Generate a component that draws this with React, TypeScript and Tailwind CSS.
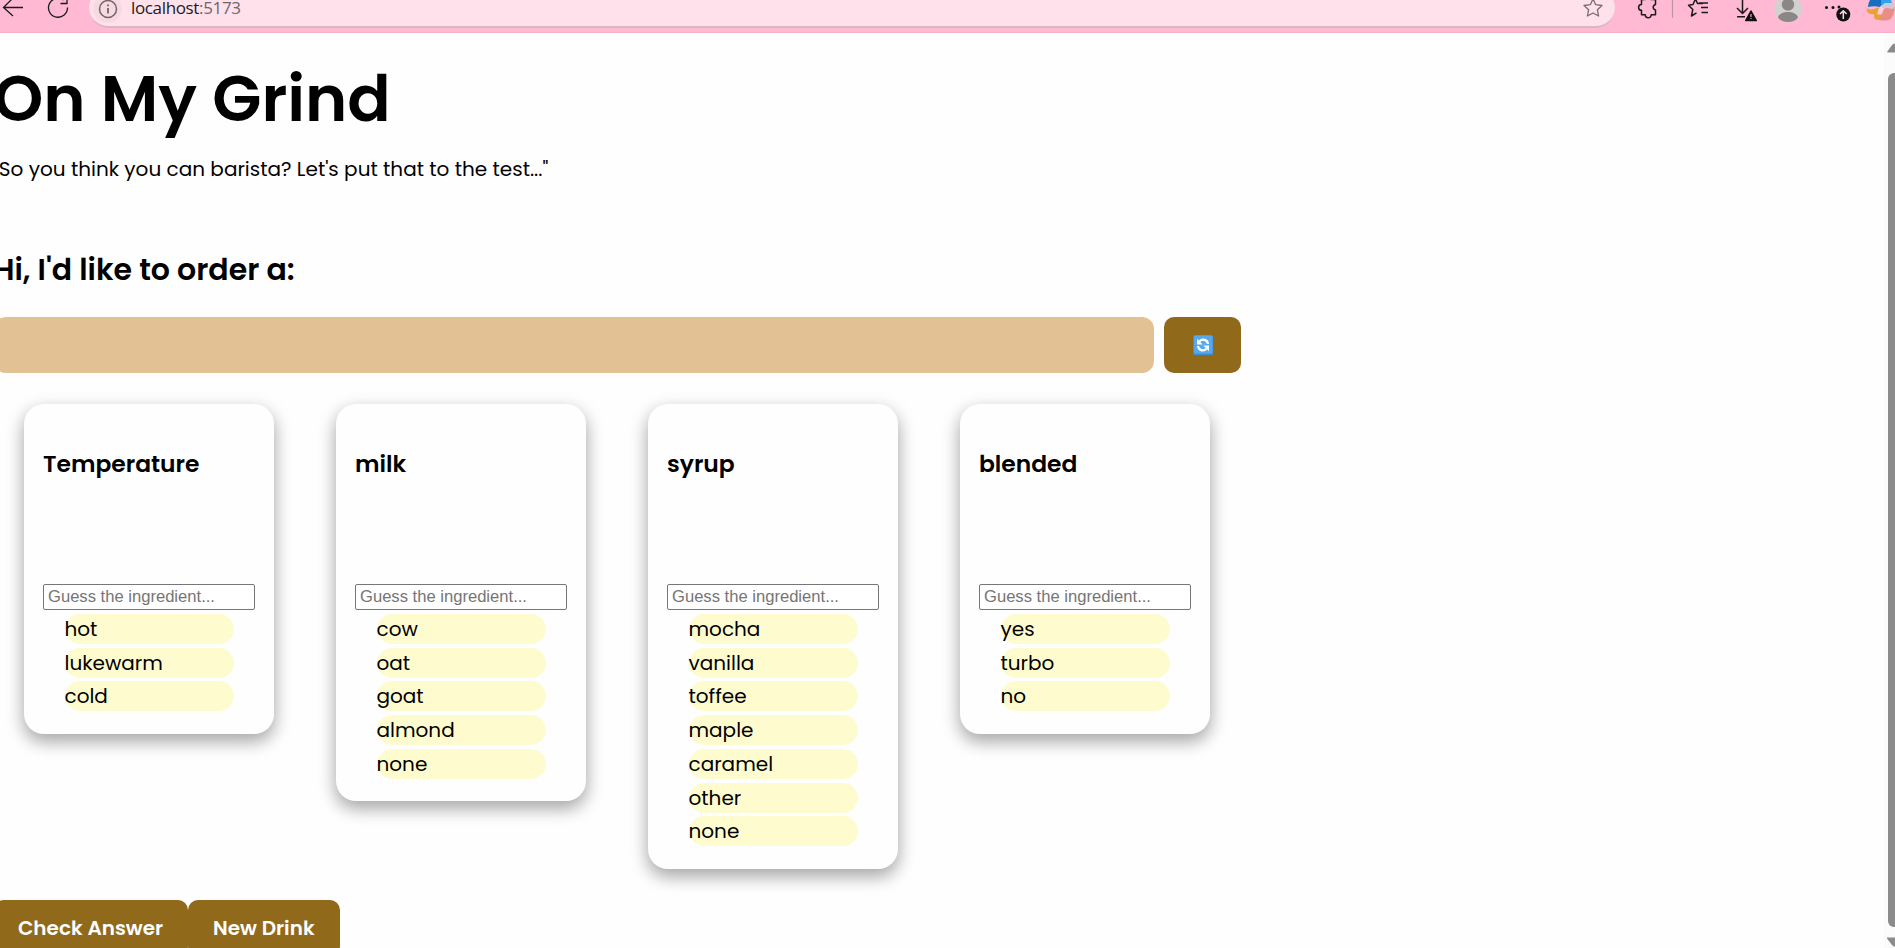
import React from "react";

const columns = [
  { title: "Temperature", items: ["hot", "lukewarm", "cold"] },
  { title: "milk", items: ["cow", "oat", "goat", "almond", "none"] },
  { title: "syrup", items: ["mocha", "vanilla", "toffee", "maple", "caramel", "other", "none"] },
  { title: "blended", items: ["yes", "turbo", "no"] },
];

function BrowserBar() {
  return (
    <header className="relative flex h-[33px] shrink-0 items-start overflow-hidden border-b border-[#f3b0c8] bg-[#ffb9d2] text-[#1b1b1b]">
      <svg className="h-[33px] w-[89px] shrink-0" viewBox="0 0 89 33" fill="none" stroke="currentColor" strokeWidth="1.3">
        <path d="M23 7.5H3.5M12.5 -1.5L3.500 7.500l9.500 8.500" />
        <path d="M63.500 0A9.500 9.500 0 1 0 67.500 7.500M60.500 3.500h6.500V-2" />
      </svg>
      <div className="-mt-[12px] flex h-[40px] w-[1526px] shrink-0 items-center rounded-full border-b-2 border-[#d9b8c4] bg-[#ffe1eb] pl-[4px] pr-[11px]">
        <div className="mt-[3px] flex size-[29px] items-center justify-center rounded-full bg-[#f7d9e2]">
          <svg className="size-[20px]" viewBox="0 0 20 20" fill="none" stroke="#73656a" strokeWidth="1.500">
            <circle cx="10" cy="10" r="8.500" />
            <path d="M10 9v5.500M10 5.500v1.800" strokeWidth="1.800" />
          </svg>
        </div>
        <p className="ml-[9px] mt-[2px] font-['Open_Sans',sans-serif] text-[17px] leading-[24px] tracking-[-0.35px] text-[#1b1b1b]">
          localhost<span className="text-[#70656a]">:5173</span>
        </p>
        <svg className="ml-auto mt-[1px] size-[22px]" viewBox="0 0 22 22" fill="none" stroke="#7b6b71" strokeWidth="1.300" strokeLinejoin="round">
          <path d="M11 2l2.700 5.700 6.300.8-4.600 4.300 1.200 6.200L11 16l-5.600 3 1.200-6.200L2 8.500l6.300-.8z" />
        </svg>
      </div>
      <svg className="h-[33px] w-[280px] shrink-0" viewBox="1615 0 280 33" fill="none" stroke="currentColor" strokeWidth="1.500" strokeLinejoin="round">
        <path d="M1641.500 -0.500h3.500a3 3 0 0 1 6 0h4.500v5a2.800 2.800 0 0 0 0 5.500v4.800h-4.300a3 3 0 0 1-6 0h-3.700v-4.500a2.900 2.900 0 0 1 0-5.800z" />
        <path d="M1672.500 0v18" stroke="#bd96a3" strokeWidth="1.200" />
        <path d="M1703 3.500h-5.500L1695.500 -1l-2.500 5.500-4.500.7 4.300 4.300-1.300 6.500 5-3.200M1701 7.500h7M1699 3h9M1701.500 12.500h6.500" />
        <path d="M1742.500 -2V13M1737 8l5.500 5.500L1748 8M1737 16.700h8" />
        <path d="M1751 11l5.300 9.500h-10.600z" fill="#111" stroke="#111" />
        <path d="M1751 14v3M1751 18v1" stroke="#eaa9c1" strokeWidth="1.200" />
        <circle cx="1788" cy="8.500" r="13.700" fill="#d1d1d1" stroke="none" />
        <circle cx="1788" cy="4.500" r="6.200" fill="#8b8787" stroke="none" />
        <path d="M1778 17.500c1-7.500 19-7.500 20 0-4 6-16 6-20 0z" fill="#8b8787" stroke="none" />
        <g fill="#111" stroke="none">
          <circle cx="1826.500" cy="7.500" r="1.500" />
          <circle cx="1833" cy="7.500" r="1.500" />
          <circle cx="1839" cy="7" r="1.500" />
          <circle cx="1843.300" cy="14.500" r="7" />
        </g>
        <path d="M1843.300 19v-8M1840 14l3.300-3.300 3.300 3.300" stroke="#ffd9e6" />
        <g stroke="none">
          <path d="M1870 0h14l-4 7c-4-1-8-1-12 0 0-3 1-5 2-7z" fill="#176fc0" />
          <path d="M1881 0h10l1 3h-7l-4 3z" fill="#2fa4ea" />
          <path d="M1867 8c4 3 7 1 12-1l-2 7c2 1 4 1 6 0-1 4-2 6-5 6-4 0-4-3-4-6-5 1-8-2-7-6z" fill="#e9a23a" />
          <path d="M1886 5h7c3 2 1 9-1 12-2 4-6 4-13 3 3-4 4-10 7-15z" fill="#e98e84" />
          <path d="M1882 6l3-3h8c2 2 1 4 0 6l-6-1-4 1z" fill="#cfc6dc" />
          <path d="M1880 7l4 1-3 6h-3z" fill="#ffd0dc" />
        </g>
      </svg>
    </header>
  );
}

function RefreshIcon() {
  return (
    <svg className="size-[20px]" viewBox="0 0 20 20" role="img">
      <rect width="20" height="20" rx="1.500" fill="#3f8fd6" />
      <rect x="1" y="0.500" width="18.500" height="18" rx="1.500" fill="#58a8ec" />
      <g fill="none" stroke="#fff" strokeWidth="2.200">
        <path d="M6.500 6.200C9.500 3.200 14.600 4.600 14.900 9" />
        <path d="M13.500 13.800C10.500 16.800 5.400 15.400 5.100 11" />
      </g>
      <path d="M4 3.800v5.700h5.700zM16 16.200v-5.700h-5.700z" fill="#fff" />
    </svg>
  );
}

function IngredientCard({ title, items }: { title: string; items: string[] }) {
  return (
    <section className="flex w-[250px] flex-col rounded-[20px] bg-[#fefefe] px-[19px] pb-[22.500px] shadow-[0_8px_16px_0_rgba(0,0,0,0.2),0_6px_20px_0_rgba(0,0,0,0.19)]">
      <h3 className="mt-[42px] text-[23.400px] font-semibold leading-[36px]">{title}</h3>
      <input
        className="mt-[102px] h-[26px] w-[212px] rounded-[2px] border border-[#767676] bg-white px-[4px] font-['Liberation_Sans',Arial,sans-serif] text-[16.600px] placeholder:text-[#757575]"
        placeholder="Guess the ingredient..."
      />
      <ul className="ml-[21.500px] mt-[4px] flex w-[169px] flex-col gap-[3.730px]">
        {items.map((item) => (
          <li key={item} className="h-[30px] rounded-full bg-[#fefccf] text-[20px] leading-[30px]">
            {item}
          </li>
        ))}
      </ul>
    </section>
  );
}

export default function App() {
  return (
    <div className="flex h-[948px] w-[1895px] flex-col overflow-hidden bg-[#fefefe] font-[Poppins,Inter,sans-serif] text-black">
      <BrowserBar />
      <div className="flex min-h-0 flex-1">
        <main className="min-w-0 flex-1 overflow-hidden">
          <h1 className="-ml-[7px] mt-[18px] whitespace-nowrap text-[64px] font-semibold leading-[96px]">On My Grind</h1>
          <p className="-ml-[7px] mt-[7px] whitespace-nowrap text-[20px] leading-[30px]">
            "So you think you can barista? Let's put that to the test..."
          </p>
          <h2 className="-ml-[7px] mt-[62px] whitespace-nowrap text-[30px] font-semibold leading-[48px]">Hi, I'd like to order a:</h2>
          <div className="-ml-[6px] mt-[23px] flex gap-[10px]">
            <div className="h-[56px] w-[1160px] rounded-[12px] bg-[#e2c294]" />
            <button className="flex h-[56px] w-[77px] items-center justify-center rounded-[10px] bg-[#906a1a]">
              <RefreshIcon />
            </button>
          </div>
          <div className="ml-[24px] mt-[31px] flex h-[465px] items-start gap-[62px]">
            {columns.map((column) => (
              <IngredientCard key={column.title} {...column} />
            ))}
          </div>
          <div className="-ml-[6px] mt-[31px] flex text-[20px] font-semibold leading-[30px] text-white">
            <button className="h-[56px] w-[194px] rounded-[10px] bg-[#906a1a] pl-[24px] text-left">Check Answer</button>
            <button className="h-[56px] w-[152px] rounded-[10px] bg-[#906a1a] pl-[25px] text-left">New Drink</button>
          </div>
        </main>
        <aside className="flex w-[11px] flex-col items-end overflow-hidden bg-[#fbfbfb]">
          <svg className="mt-[10px] h-[10px] w-[8px] shrink-0" viewBox="0 0 8 10">
            <path d="M0 9l5-7q1-1.500 3-1.500V9.500H1z" fill="#8b8b8b" />
          </svg>
          <div className="mt-[20px] h-[854px] w-[7px] shrink-0 rounded-l-[6px] bg-[#8b8b8b]" />
          <svg className="mt-[10px] h-[11px] w-[8px] shrink-0" viewBox="0 0 8 11">
            <path d="M0 0.500h8V9.500q-2 0-3-1.500L0 1.500z" fill="#8b8b8b" />
          </svg>
        </aside>
      </div>
    </div>
  );
}
